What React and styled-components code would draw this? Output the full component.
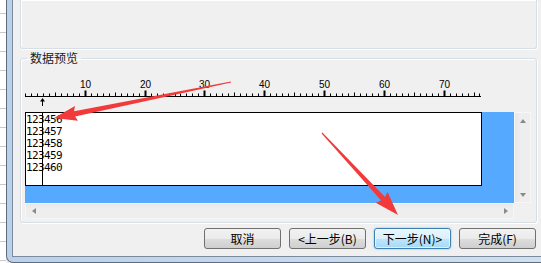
import React from 'react';
import styled, { createGlobalStyle, css } from 'styled-components';

const GlobalStyle = createGlobalStyle`
  html, body {
    margin: 0;
    padding: 0;
    background: #f0f0f0;
  }
  body {
    font-family: "Noto Sans CJK SC", "Liberation Sans", sans-serif;
    color: #000;
  }
`;

const rows = ['123456', '123457', '123458', '123459', '123460'];
const buttons = [
  { label: '取消' },
  { label: '<上一步(B)' },
  { label: '下一步(N)>', focused: true },
  { label: '完成(F)' },
];

const Page = styled.div`
  position: relative;
  display: flex;
  width: 541px;
  height: 263px;
  overflow: hidden;
`;

// spreadsheet peeking out behind the dialog
const SheetEdge = styled.div`
  flex: 0 0 6px;
  background-color: #fff;
  background-image: linear-gradient(to bottom, transparent 18px, #c9c9c9 18px);
  background-size: 100% 19px;
  background-position: 0 -5px;
`;

const Frame = styled.div`
  flex: 1;
  display: flex;
  padding: 0 0 5px 5px;
  background: linear-gradient(to right, #b9d1ec, #cfe0f3);
  border-left: 1px solid #5f6c7b;
  border-bottom: 1px solid #5f6c7b;
  border-bottom-left-radius: 7px;
`;

const Client = styled.div`
  flex: 1;
  display: flex;
  flex-direction: column;
  min-width: 540px;
  padding-left: 7px;
  background: #f0f0f0;
  border-left: 1px solid #7d8a99;
  border-bottom: 1px solid #7d8a99;
`;

const groupLine = css`
  border: 1px solid #d5dfe5;
  border-radius: 3px;
  box-shadow: inset 1px 1px 0 #fff, 1px 1px 0 #fff;
`;

const TopGroup = styled.div`
  ${groupLine};
  box-sizing: border-box;
  width: 517px;
  height: 49px;
  border-top: none;
  border-top-left-radius: 0;
  border-top-right-radius: 0;
`;

const Group = styled.fieldset`
  ${groupLine};
  box-sizing: border-box;
  width: 517px;
  margin: 2px 0 0;
  padding: 0 4px 3px;
  min-width: 0;
`;

const Legend = styled.legend`
  margin-left: 2px;
  padding: 0 3px;
  font-size: 12px;
  line-height: 14px;
  color: #1a1a1a;
`;

const RulerSvg = styled.svg`
  display: block;
  margin-top: 11px;
  overflow: visible;
`;

const ScrollView = styled.div`
  display: grid;
  grid-template-columns: 489px 17px;
  grid-template-rows: 91px 16px;
  width: 506px;
  margin-top: 5px;
`;

const Viewport = styled.div`
  background: #55a9fe;
  overflow: hidden;
`;

const DataBox = styled.div`
  position: relative;
  box-sizing: border-box;
  width: 457px;
  height: 74px;
  padding-top: 1px;
  border: 1px solid #000;
  background: #fff;
  font-family: "DejaVu Sans Mono", "Liberation Mono", monospace;
  font-size: 11px;
  letter-spacing: -0.62px;
  line-height: 12px;
`;

const ColumnMark = styled.div`
  position: absolute;
  top: 0;
  bottom: 0;
  left: 16px;
  width: 1px;
  background: #000;
`;

const DataRow = styled.div`
  white-space: pre;
`;

const ScrollBar = styled.div`
  display: flex;
  flex-direction: ${({ $vertical }) => ($vertical ? 'column' : 'row')};
  justify-content: space-between;
  align-items: center;
  box-sizing: border-box;
  background: ${({ $vertical }) =>
    $vertical
      ? 'linear-gradient(to right, #e8e8e8, #eeeeee 40%, #eeeeee)'
      : 'linear-gradient(to bottom, #e8e8e8, #eeeeee 40%, #eeeeee)'};
  border: 1px solid #f6f6f6;
`;

const ScrollButton = styled.div`
  display: flex;
  align-items: center;
  justify-content: center;
  width: 15px;
  height: 15px;
`;

const arrowShapes = {
  up: css`
    border-left: 3.5px solid transparent;
    border-right: 3.5px solid transparent;
    border-bottom: 4px solid #8a8a8a;
  `,
  down: css`
    border-left: 3.5px solid transparent;
    border-right: 3.5px solid transparent;
    border-top: 4px solid #8a8a8a;
  `,
  left: css`
    border-top: 3.5px solid transparent;
    border-bottom: 3.5px solid transparent;
    border-right: 4px solid #8a8a8a;
  `,
  right: css`
    border-top: 3.5px solid transparent;
    border-bottom: 3.5px solid transparent;
    border-left: 4px solid #8a8a8a;
  `,
};

const Arrow = styled.span`
  width: 0;
  height: 0;
  ${({ $dir }) => arrowShapes[$dir]};
`;

const Corner = styled.div`
  background: #f0f0f0;
`;

const ButtonRow = styled.div`
  display: flex;
  justify-content: flex-end;
  gap: 8px;
  width: 517px;
  margin-top: 5px;
  padding-right: 1px;
  box-sizing: border-box;
`;

const Button = styled.button`
  box-sizing: border-box;
  width: 77px;
  height: 21px;
  padding: 0;
  border: 1px solid ${({ $focused }) => ($focused ? '#3c7fb1' : '#707070')};
  border-radius: 3px;
  background: ${({ $focused }) =>
    $focused
      ? 'linear-gradient(#eaf6fd 0%, #d9f0fc 50%, #bee6fd 51%, #a7d9f5 100%)'
      : 'linear-gradient(#f2f2f2 0%, #ebebeb 50%, #dddddd 51%, #cfcfcf 100%)'};
  box-shadow: inset 0 0 0 1px
      ${({ $focused }) => ($focused ? 'rgba(255,255,255,0.6)' : '#fcfcfc')},
    ${({ $focused }) => ($focused ? '0 0 2px #6ab8e8' : 'none')};
  font-family: "Noto Sans CJK SC", "Liberation Sans", sans-serif;
  font-size: 12px;
  line-height: 19px;
  color: #000;
`;

const Overlay = styled.svg`
  position: absolute;
  top: 0;
  left: 0;
  pointer-events: none;
`;

function Ruler() {
  const ticks = [];
  for (let n = 0; n <= 76; n++) {
    const x = Math.round(5.98 * n) + 0.5;
    const major = n > 0 && n % 10 === 0;
    const mid = n % 5 === 0 && !major && n > 0;
    const h = major ? 6 : mid ? 4 : 3;
    ticks.push(
      <line
        key={n}
        x1={x}
        x2={x}
        y1={20.5 - h}
        y2={21}
        stroke="#000"
        strokeWidth={major ? 2 : 1}
      />
    );
    if (major) {
      ticks.push(
        <text
          key={`t${n}`}
          x={x}
          y={11.5}
          textAnchor="middle"
          fontFamily='"Liberation Sans", Arial, sans-serif'
          fontSize="10"
          fill="#000"
        >
          {n}
        </text>
      );
    }
  }
  return (
    <RulerSvg width="460" height="31" viewBox="0 0 460 31">
      <line x1="0" x2="456" y1="20.5" y2="20.5" stroke="#000" />
      {ticks}
      {/* column break marker */}
      <line x1="17.5" x2="17.5" y1="23" y2="30" stroke="#000" />
      <path d="M15 25.5 L17.5 22 L20 25.5 Z" fill="#000" />
    </RulerSvg>
  );
}

function arrowPoints(tx, ty, px, py, head = 20, wing = 7, shaft = 2.5) {
  const dx = px - tx;
  const dy = py - ty;
  const len = Math.hypot(dx, dy);
  const ux = dx / len;
  const uy = dy / len;
  const nx = -uy;
  const ny = ux;
  const bx = px - head * ux;
  const by = py - head * uy;
  const pts = [
    [tx + 0.6 * nx, ty + 0.6 * ny],
    [bx + shaft * nx, by + shaft * ny],
    [bx + wing * nx - 2 * ux, by + wing * ny - 2 * uy],
    [px, py],
    [bx - wing * nx - 2 * ux, by - wing * ny - 2 * uy],
    [bx - shaft * nx, by - shaft * ny],
    [tx - 0.6 * nx, ty - 0.6 * ny],
  ];
  return pts.map((p) => p.map((v) => v.toFixed(1)).join(',')).join(' ');
}

export default function App() {
  return (
    <>
      <GlobalStyle />
      <Page>
        <SheetEdge />
        <Frame>
          <Client>
            <TopGroup />
            <Group>
              <Legend>数据预览</Legend>
              <Ruler />
              <ScrollView>
                <Viewport>
                  <DataBox>
                    <ColumnMark />
                    {rows.map((r) => (
                      <DataRow key={r}>{r}</DataRow>
                    ))}
                  </DataBox>
                </Viewport>
                <ScrollBar $vertical>
                  <ScrollButton>
                    <Arrow $dir="up" />
                  </ScrollButton>
                  <ScrollButton>
                    <Arrow $dir="down" />
                  </ScrollButton>
                </ScrollBar>
                <ScrollBar>
                  <ScrollButton>
                    <Arrow $dir="left" />
                  </ScrollButton>
                  <ScrollButton>
                    <Arrow $dir="right" />
                  </ScrollButton>
                </ScrollBar>
                <Corner />
              </ScrollView>
            </Group>
            <ButtonRow>
              {buttons.map((b) => (
                <Button key={b.label} type="button" $focused={b.focused}>
                  {b.label}
                </Button>
              ))}
            </ButtonRow>
          </Client>
        </Frame>
        <Overlay width="541" height="263" viewBox="0 0 541 263">
          <polygon points={arrowPoints(231, 82, 54, 118, 21, 7.5, 2.6)} fill="#f23a3a" />
          <polygon points={arrowPoints(322, 133, 398, 215, 22, 8, 2.6)} fill="#f23a3a" />
        </Overlay>
      </Page>
    </>
  );
}
